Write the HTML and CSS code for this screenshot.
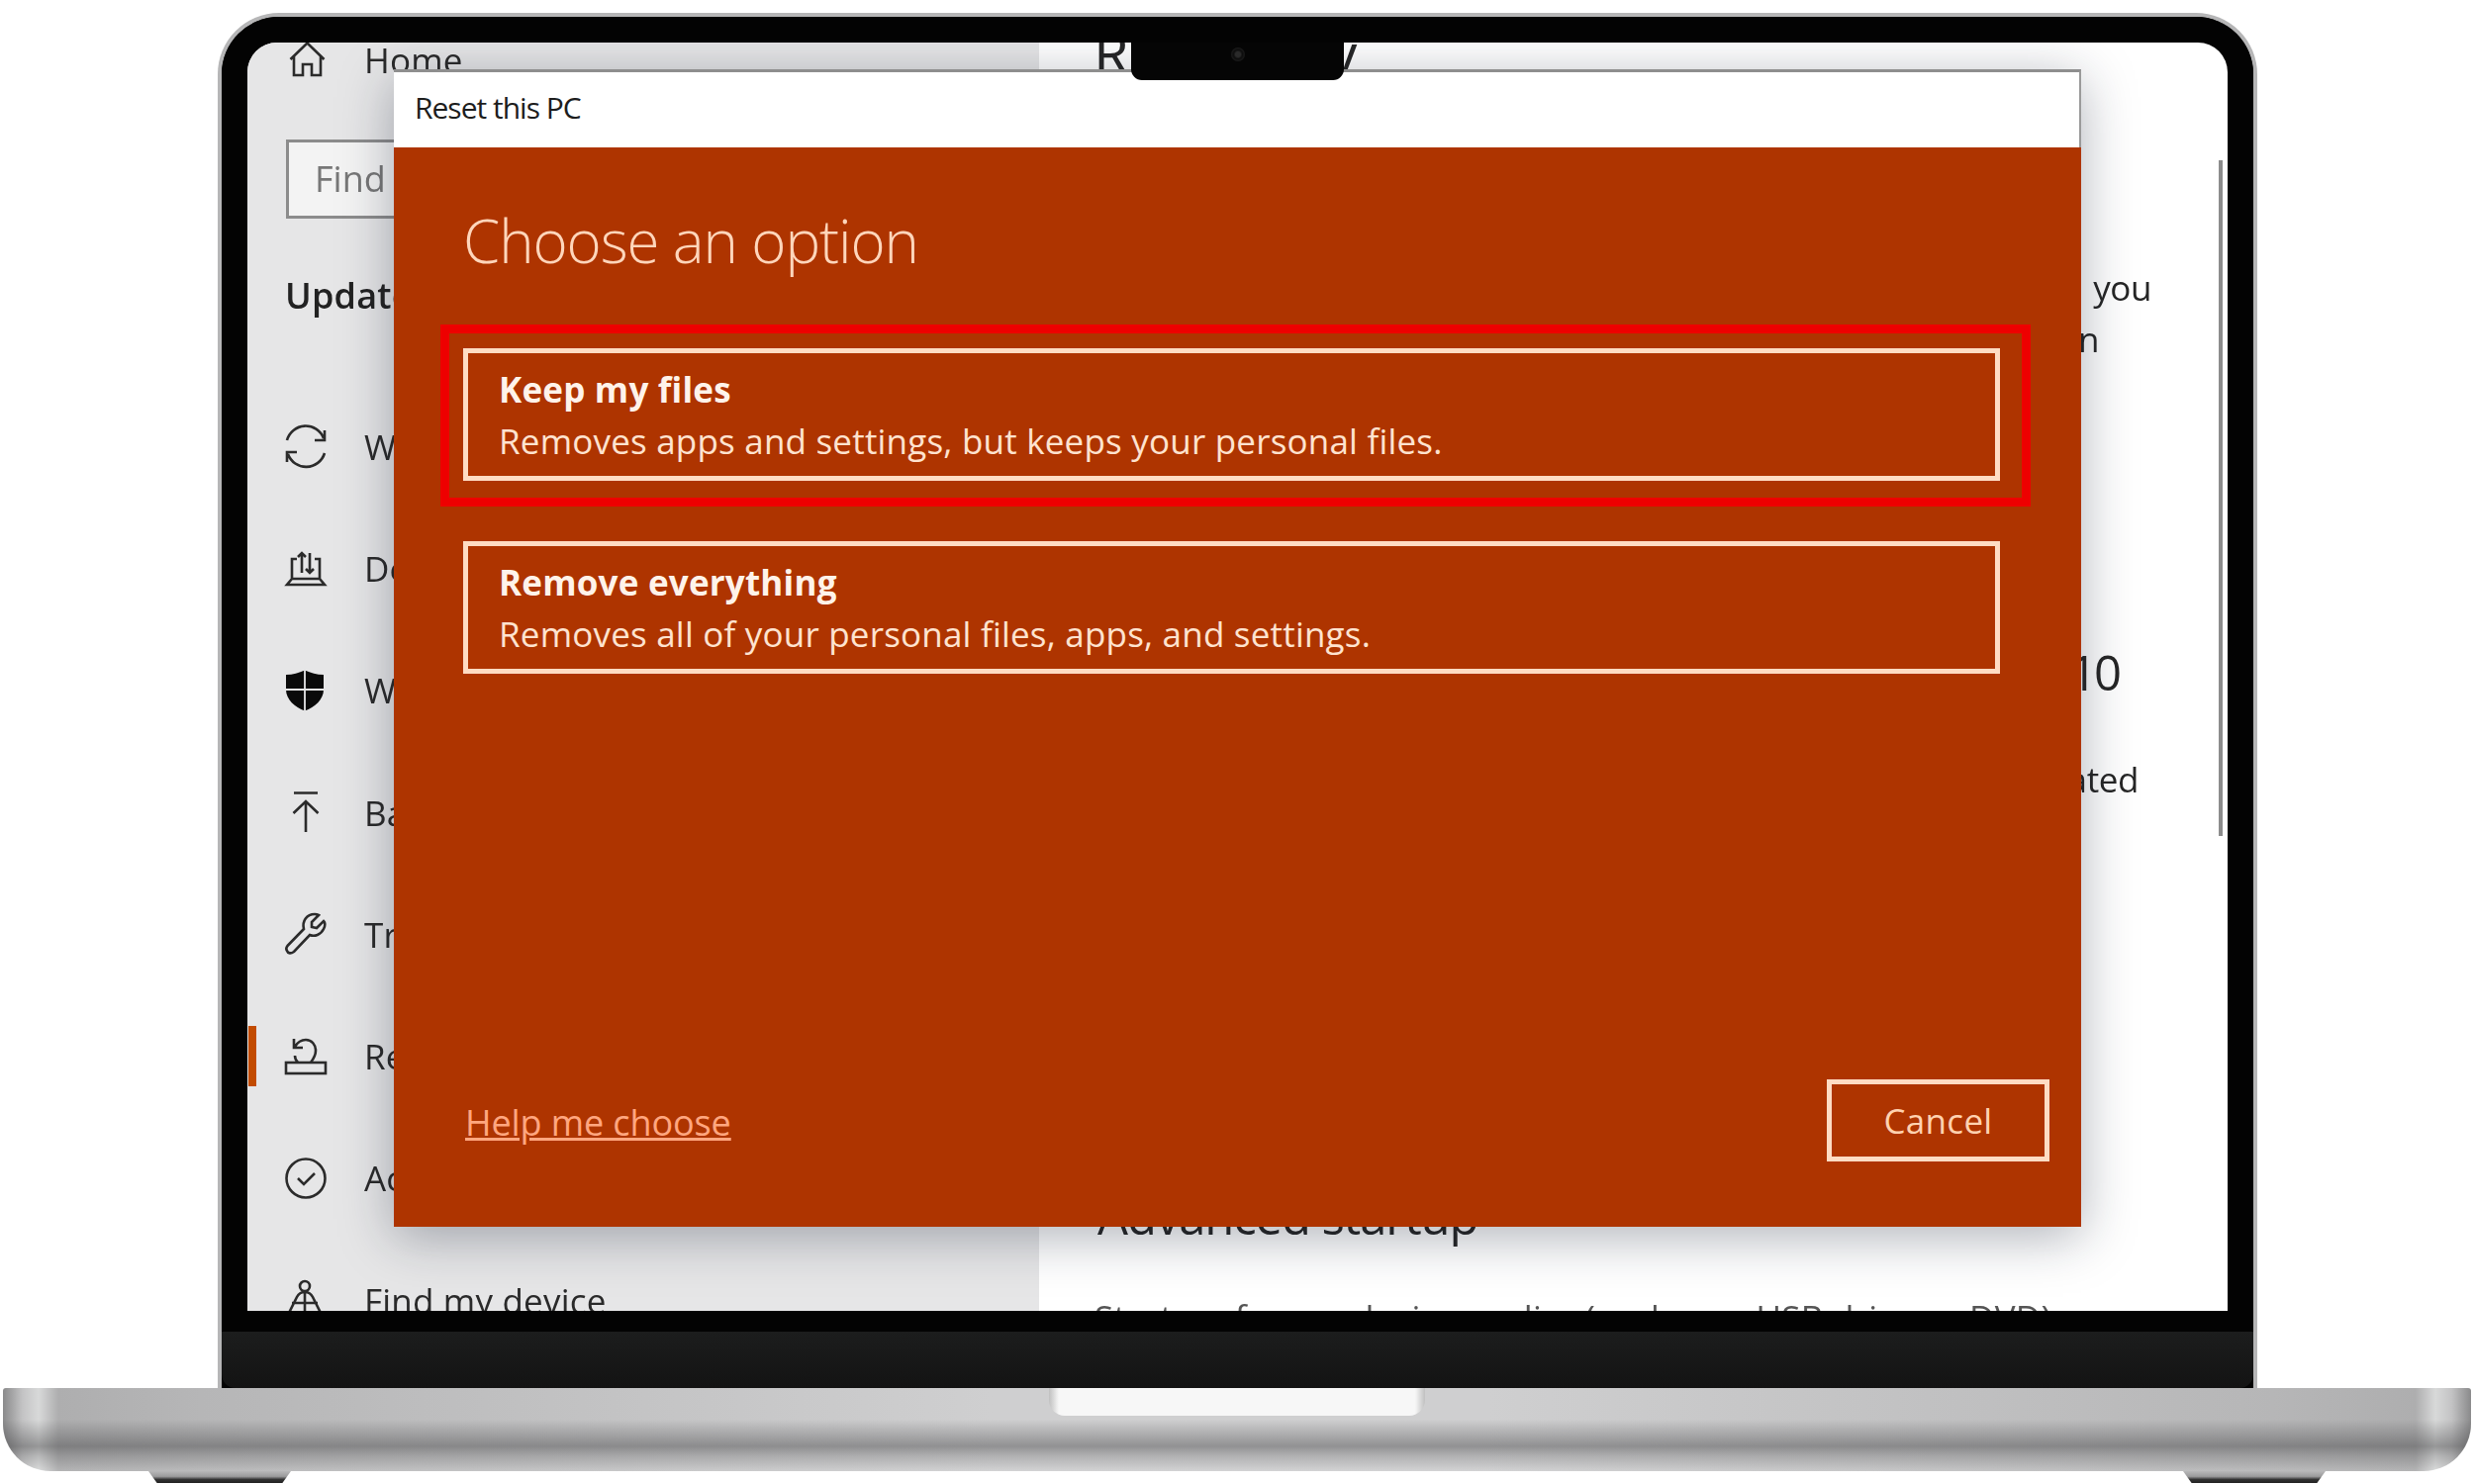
FILE: index.html
```html
<!DOCTYPE html>
<html lang="en">
<head>
<meta charset="utf-8">
<title>Reset this PC</title>
<link rel="stylesheet" href="styles.css">
</head>
<body>
<div class="laptop">
  <div class="lid">
    <div class="bezel">
      <div class="screen">
        <aside class="sidebar">
          <div class="home-row">
            <span class="icon">
              <svg viewBox="0 0 42 42" class="glyph"><path d="M5.5 21 L22.5 4.5 L39.5 21 M9 18 V37 H18 V26 H27 V37 H36 V18"/></svg>
            </span>
            <span>Home</span>
          </div>
          <div class="search">Find a setting</div>
          <div class="section-title">Update &amp; Security</div>
          <nav class="nav">
            <div class="nav-row">
              <span class="icon"><svg viewBox="0 0 42 42" class="glyph"><path d="M2 15 A19.5 19.5 0 0 1 39 13 M40 5 V15 H30 M40 28 A19.5 19.5 0 0 1 3 29 M2 37 V27 H12"/></svg></span>
              <span>Windows Update</span>
            </div>
            <div class="nav-row">
              <span class="icon"><svg viewBox="0 0 42 42" class="glyph"><path d="M12 12 H7 V32 H35 V12 H30 M7 32 L2 38 H40 L35 32 M17 26 V6 M13 10 L17 6 L21 10 M25 6 V26 M21 22 L25 26 L29 22"/></svg></span>
              <span>Delivery Optimisation</span>
            </div>
            <div class="nav-row">
              <span class="icon"><svg viewBox="0 0 42 42"><path class="solid" d="M1 5 C8 5 14 3 20 0.5 C26 3 32 5 39 5 V20 C39 30 30 38 20 41.5 C10 38 1 30 1 20 Z"/><path class="shield-cross" d="M20 0 V42 M0 20 H40"/></svg></span>
              <span>Windows Security</span>
            </div>
            <div class="nav-row">
              <span class="icon"><svg viewBox="0 0 42 42" class="glyph"><path d="M9 1.5 H33 M21 41 V10 M8.5 22 L21 10 L33.5 22"/></svg></span>
              <span>Backup</span>
            </div>
            <div class="nav-row">
              <span class="icon"><svg viewBox="0 0 42 42" class="glyph"><path d="M2.5 33 L19 16 C17 8 22 1 30 1 C32 1 33 1.5 34 2 L27 9 L27 14 L32 15 L39 8 C41 10 40 14 39 16 C36 22 30 24 25 22 L9 39 C6 41 3 41 2 38 C0.5 36 1 35 2.5 33 Z"/></svg></span>
              <span>Troubleshoot</span>
            </div>
            <div class="nav-row nav-row-active">
              <span class="icon"><svg viewBox="0 0 42 42" class="glyph"><path d="M10 11 C13 6 17 4 21 4 C27 4 31 9 31 15 C31 20 29 23 26 27 M9 3 V12 H18 M13 27 C11 25 10 23 10 20"/><rect x="1" y="27" width="40" height="11"/></svg></span>
              <span>Recovery</span>
            </div>
            <div class="nav-row">
              <span class="icon"><svg viewBox="0 0 42 42" class="glyph"><circle cx="21" cy="21" r="19.5"/><path d="M13 21 L19 27 L30 16"/></svg></span>
              <span>Activation</span>
            </div>
            <div class="nav-row">
              <span class="icon"><svg viewBox="0 0 42 42" class="glyph"><circle cx="20" cy="7" r="5"/><path d="M20 12 V42 M7 24 H33 M2 38 L12 18 C14 14 16 13 20 13 C24 13 26 14 28 18 L38 38"/></svg></span>
              <span>Find my device</span>
            </div>
          </nav>
        </aside>
        <main class="content">
          <h1 class="page-title">Recovery</h1>
          <h2 class="sub sub-reset">Reset this PC</h2>
          <p class="para para-reset">
            <span class="line line-you">If your PC isn't running well, resetting it might help. This lets you</span>
            <span class="line line-n">choose to keep your personal files or remove them, and then</span>
            <span class="line">reinstalls Windows.</span>
          </p>
          <div class="hidden-button">Get started</div>
          <h2 class="sub sub-back">Go back to the previous version of Windows 10</h2>
          <p class="para para-back">
            <span class="line line-ated">This option is no longer available because your PC was updated</span>
            <span class="line">more than 10 days ago.</span>
          </p>
          <h2 class="sub sub-advanced">Advanced startup</h2>
          <p class="para para-advanced">
            <span class="line line-start">Start up from a device or disc (such as a USB drive or DVD),</span>
          </p>
        </main>
        <div class="scrollbar"></div>
        <section class="dialog">
          <header class="dialog-title">Reset this PC</header>
          <div class="dialog-body">
            <h2 class="dialog-heading">Choose an option</h2>
            <div class="highlight">
              <div class="option">
                <div class="option-name">Keep my files</div>
                <div class="option-text">Removes apps and settings, but keeps your personal files.</div>
              </div>
            </div>
            <div class="option option-second">
              <div class="option-name">Remove everything</div>
              <div class="option-text">Removes all of your personal files, apps, and settings.</div>
            </div>
            <footer class="dialog-footer">
              <a class="help-link" href="#">Help me choose</a>
              <div class="cancel">Cancel</div>
            </footer>
          </div>
        </section>
        <div class="notch"><span class="camera"></span></div>
      </div>
    </div>
    <div class="hinge"></div>
  </div>
  <div class="base"><div class="lip"></div></div>
  <div class="feet"><div class="foot"></div><div class="foot"></div></div>
</div>
</body>
</html>
```
FILE: styles.css
```css
* { box-sizing: border-box; }
html, body { margin: 0; padding: 0; background: #fff; }
body {
  width: 2500px;
  height: 1500px;
  overflow: hidden;
  font-family: "Open Sans", "Noto Sans", sans-serif;
}
.laptop { width: 2494px; margin: 0 3px; padding-top: 13px; }

/* lid */
.lid {
  width: 2061px;
  margin-left: 217px;
  border: 4px solid #b6b6b7;
  border-bottom: 0;
  border-radius: 62px 62px 0 0;
  background: #030303;
}
.bezel {
  padding: 26px 26px 21px 26px;
  background: #030303;
  border-radius: 58px 58px 0 0;
}
.hinge {
  height: 57px;
  background: linear-gradient(180deg, #1c1d1d, #131313);
  border-radius: 0 0 14px 14px;
}

/* screen */
.screen {
  position: relative;
  height: 1282px;
  display: flex;
  overflow: hidden;
  border-radius: 30px 30px 0 0;
  background: #fff;
  filter: blur(0.7px);
}
.sidebar {
  width: 800px;
  flex: none;
  background: #e6e6e7;
  color: #2a2a2a;
  font-size: 35px;
  letter-spacing: 0.2px;
}
.icon { width: 42px; height: 42px; flex: none; display: block; }
.icon svg { display: block; width: 42px; height: 42px; overflow: visible; }
.glyph { fill: none; stroke: #2b2b2b; stroke-width: 2.6; }
.solid { fill: #0a0a0a; }
.shield-cross { fill: none; stroke: #e6e6e7; stroke-width: 1.8; }
.home-row {
  display: flex;
  align-items: center;
  gap: 38px;
  height: 34px;
  margin-bottom: 2px;
  padding-left: 38px;
  white-space: nowrap;
}
.search {
  width: 500px;
  height: 80px;
  margin: 64px 0 0 39px;
  padding-left: 26px;
  line-height: 74px;
  font-size: 36px;
  letter-spacing: 0;
  color: #777;
  background: #f3f3f3;
  border: 3px solid #8c8c8c;
}
.section-title {
  margin: 58px 0 0 38px;
  line-height: 40px;
  font-size: 36px;
  font-weight: 600;
  color: #222;
}
.nav { margin-top: 70.5px; }
.nav-row {
  position: relative;
  display: flex;
  align-items: center;
  gap: 38px;
  height: 123.3px;
  padding-left: 38px;
  white-space: nowrap;
}
.nav-row-active::before {
  content: "";
  position: absolute;
  left: 1px;
  top: 31px;
  width: 8px;
  height: 61px;
  background: #c24b00;
}

/* right-hand content, mostly covered by the dialog */
.content {
  flex: 1;
  min-width: 0;
  padding: 0 0 0 55px;
  color: #262626;
  overflow: hidden;
}
.page-title {
  margin: 0;
  font-size: 58px;
  font-weight: 400;
  line-height: 21px;
  letter-spacing: 3px;
  white-space: nowrap;
}
.sub {
  margin: 0;
  font-size: 49px;
  font-weight: 400;
  line-height: 60px;
  white-space: nowrap;
  letter-spacing: -1.1px;
}
.sub-reset { margin-top: 107px; }
.sub-back { margin-top: 108px; text-align: right; padding-right: 110px; letter-spacing: -3px; }
.sub-advanced { margin-top: 333px; padding-left: 4px; }
.para { margin: 0; font-size: 35px; line-height: 52px; }
.para-reset { margin-top: 34px; }
.para-back { margin-top: 53px; }
.para-advanced { margin-top: 47px; }
.line { display: block; white-space: nowrap; letter-spacing: -0.4px; word-spacing: 8px; }
.line-you, .line-n, .line-ated { display: flex; justify-content: flex-end; }
.line-you { padding-right: 77px; }
.line-n { padding-right: 130px; }
.line-ated { padding-right: 90px; }
.line-start { padding-left: 1px; letter-spacing: 0.3px; word-spacing: 0; color: #555; }
.hidden-button { height: 60px; margin-top: 60px; }
.scrollbar {
  position: absolute;
  left: 1992px;
  top: 119px;
  width: 4px;
  height: 683px;
  background: #8c8c8c;
}

/* dialog */
.dialog {
  position: absolute;
  left: 148px;
  top: 27px;
  width: 1705px;
  height: 1170px;
  display: flex;
  flex-direction: column;
  box-shadow: 0 10px 50px rgba(20, 30, 50, 0.34);
}
.dialog-title {
  height: 79px;
  padding-left: 21px;
  line-height: 71px;
  font-size: 30px;
  letter-spacing: -1px;
  color: #1d1d1d;
  background: #fff;
  border-top: 3px solid #8e8e8e;
  border-right: 2px solid #9a9a9a;
  white-space: nowrap;
}
.dialog-body {
  flex: 1;
  display: flex;
  flex-direction: column;
  background: #ae3400;
  color: #ffe3cf;
}
.dialog-heading {
  margin: 54px 0 45px 70px;
  font-size: 60px;
  font-weight: 300;
  line-height: 80px;
  letter-spacing: -1.1px;
  color: #ffd6bb;
  white-space: nowrap;
}
.highlight {
  margin: 0 51px 0 47px;
  padding: 15px 22px 17px 14px;
  border: 9px solid #ee0000;
}
.option {
  height: 134px;
  padding: 11px 0 0 31px;
  border: 5px solid #ffdcc3;
  font-size: 35px;
  line-height: 52px;
  white-space: nowrap;
}
.option-second { margin: 35px 82px 0 70px; }
.option-name { font-weight: 700; color: #fff3ea; letter-spacing: 0.2px; }
.option-text { color: #ffe3cf; letter-spacing: 0.2px; }
.dialog-footer {
  margin: auto 32px 66px 72px;
  display: flex;
  align-items: center;
  justify-content: space-between;
}
.help-link {
  margin-top: 3px;
  color: #ffa67f;
  font-size: 36px;
  letter-spacing: -0.1px;
}
.cancel {
  width: 225px;
  height: 83px;
  border: 5px solid #ffdcc3;
  text-align: center;
  line-height: 74px;
  font-size: 35px;
  letter-spacing: 0.3px;
  color: #ffd2b0;
}

/* camera notch */
.notch {
  position: absolute;
  left: 893px;
  top: -1px;
  width: 215px;
  height: 39px;
  background: #050505;
  border-radius: 0 0 11px 11px;
  display: flex;
  justify-content: center;
  padding-top: 6px;
}
.camera {
  width: 14px;
  height: 14px;
  border-radius: 50%;
  background: radial-gradient(circle, #2a2a2a 0 25%, #0d0d0d 45%, #1b1b1b 70%, #080808 100%);
}

/* base */
.base {
  height: 84px;
  display: flex;
  justify-content: center;
  border-radius: 3px 3px 48px 48px;
  background:
    linear-gradient(180deg, rgba(60, 60, 62, 0) 0, rgba(60, 60, 62, 0) 38%, rgba(60, 60, 62, 0.16) 50%, rgba(60, 60, 62, 0.42) 70%, rgba(60, 60, 62, 0.2) 82%, rgba(255, 255, 255, 0.08) 100%),
    linear-gradient(90deg, #8a8a8b 0, #c4c4c5 20px, #d8d9d9 36px, #aeaeaf 56px, #b6b6b7 200px, #cfcfd0 1000px, #cfcfd0 1500px, #b6b6b7 2294px, #aeaeaf 2438px, #d8d9d9 2458px, #c4c4c5 2474px, #8a8a8b 2494px);
}
.lip {
  width: 380px;
  height: 28px;
  border-radius: 0 0 16px 16px;
  background: linear-gradient(90deg, #c0c0c0 0, #f7f7f7 10px, #f7f7f7 370px, #c0c0c0 100%);
}
.feet {
  display: flex;
  justify-content: space-between;
  padding: 0 147px;
}
.foot {
  width: 144px;
  height: 12px;
  clip-path: polygon(0 0, 100% 0, 94% 100%, 6% 100%);
  background: linear-gradient(180deg, #b8b8b9 0, #9a9a9b 45%, #333 70%, #222 100%);
}
```
